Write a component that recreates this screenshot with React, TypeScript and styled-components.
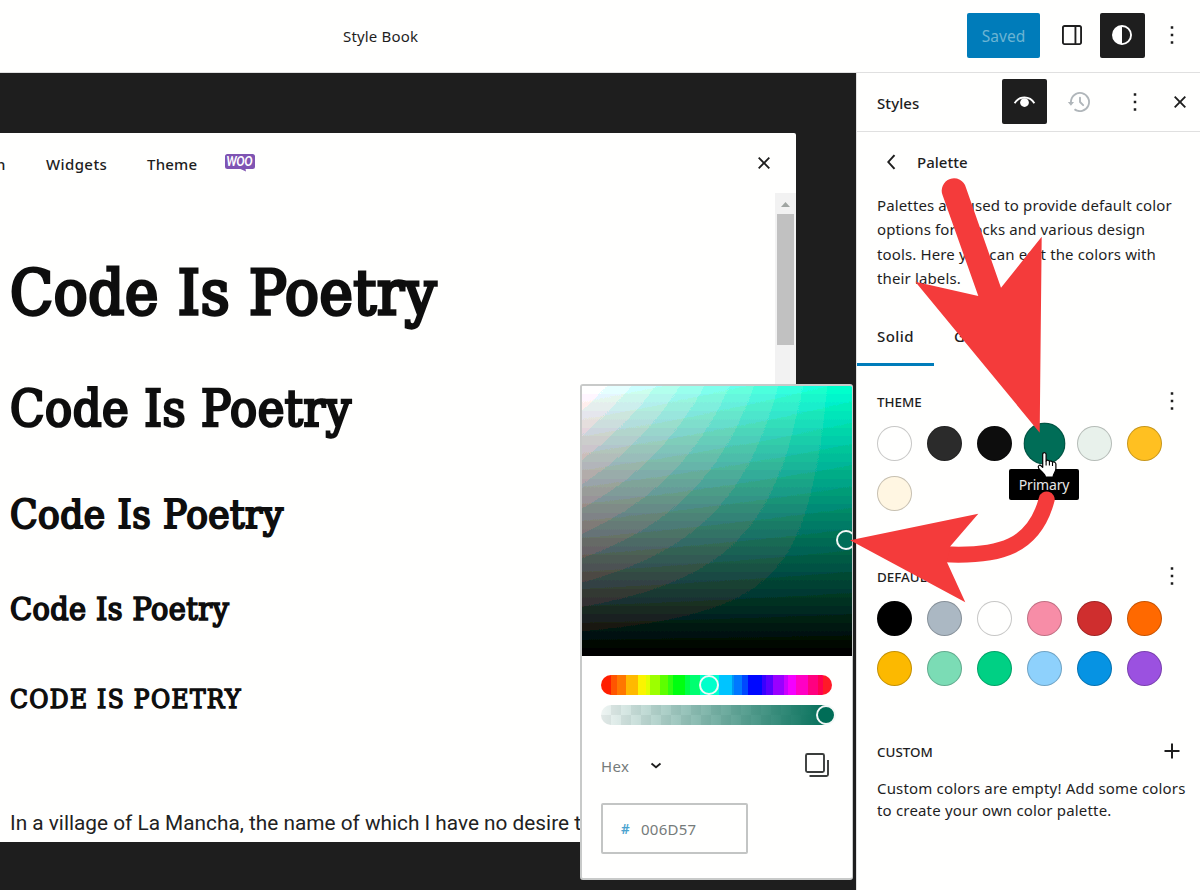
import React from 'react';
import styled, { createGlobalStyle } from 'styled-components';

const Global = createGlobalStyle`
  *, *::before, *::after { box-sizing: border-box; }
  html, body { margin: 0; padding: 0; }
  body { overflow: hidden; background: #fffffe; }
  button { border: 0; background: none; padding: 0; margin: 0; font: inherit; color: inherit; }
  h1, h2, h3, h4, h5, h6, p { margin: 0; }
`;

const Screen = styled.div`
  position: relative;
  width: 1200px;
  height: 890px;
  overflow: hidden;
  display: flex;
  flex-direction: column;
  background: #fffffe;
  color: #1e1e1e;
  font-family: 'Noto Sans', 'Open Sans', sans-serif;
  font-size: 15px;
`;

const TopBar = styled.header`
  flex: none;
  height: 73px;
  border-bottom: 1px solid #e0e0e0;
  display: flex;
  align-items: flex-start;
  justify-content: flex-end;
  padding: 13px 5px 0 343px;
`;

const DocTitle = styled.div`
  margin-right: auto;
  line-height: 46px;
  letter-spacing: 0.17px;
`;

const SavedButton = styled.button`
  width: 73px;
  height: 45px;
  margin-right: 10px;
  border-radius: 2px;
  background: #007cba;
  color: #6cb4d3;
  font-size: 15.5px;
  line-height: 46px;
`;

const IconButton = styled.button<{ $active?: boolean; $muted?: boolean; $ml?: number; $top?: number }>`
  flex: none;
  width: 45px;
  height: 45px;
  margin-left: ${(p) => p.$ml ?? 0}px;
  padding: ${(p) => p.$top ?? 7}px 7px 7px;
  display: flex;
  align-items: flex-start;
  justify-content: flex-start;
  border-radius: 2px;
  background: ${(p) => (p.$active ? '#1e1e1e' : 'transparent')};
  color: ${(p) => (p.$active ? '#fff' : p.$muted ? '#b0b6ba' : '#1e1e1e')};
`;

const Body = styled.div`
  flex: 1;
  min-height: 0;
  display: flex;
`;

const Stage = styled.main`
  width: 856px;
  padding-top: 60px;
  background: #1e1e1e;
`;

const Canvas = styled.section`
  width: 796px;
  height: 709px;
  display: flex;
  flex-direction: column;
  background: #fffffe;
  border-top-right-radius: 2px;
  overflow: hidden;
`;

const TabStrip = styled.nav`
  flex: none;
  height: 60px;
  display: flex;
  align-items: flex-start;
  padding: 8px 9px 0 0;
`;

const StripTab = styled.span<{ $w: number; $shift?: number; $ls?: number }>`
  width: ${(p) => p.$w}px;
  margin-left: ${(p) => p.$shift ?? 0}px;
  font-weight: 500;
  line-height: 46px;
  letter-spacing: ${(p) => p.$ls ?? 0.2}px;
  white-space: nowrap;
`;

const WooBadge = styled.svg`
  display: block;
  margin: 12px auto 0 0;
`;

const Preview = styled.div`
  flex: 1;
  min-height: 0;
  display: flex;
`;

const Samples = styled.div`
  flex: 1;
  padding-left: 10px;
  overflow: hidden;
  display: flex;
  flex-direction: column;
  color: #0e0e0e;
`;

const Heading = styled.h2<{ $size: number; $h: number; $ls: number }>`
  flex: none;
  font-family: 'DejaVu Serif Condensed', 'DejaVu Serif', serif;
  font-stretch: condensed;
  font-weight: 400;
  -webkit-text-stroke: 0.052em #0e0e0e;
  font-size: ${(p) => p.$size}px;
  line-height: ${(p) => p.$h}px;
  letter-spacing: ${(p) => p.$ls}px;
  white-space: nowrap;
`;

const Paragraph = styled.p`
  margin-top: 24px;
  font-family: Roboto, sans-serif;
  font-size: 20.8px;
  line-height: 32px;
  white-space: nowrap;
  color: #222;
`;

const Scrollbar = styled.div`
  flex: none;
  width: 21px;
  display: flex;
  flex-direction: column;
  align-items: center;
  background: #f2f2f2;
`;

const ScrollUp = styled.svg`
  display: block;
  width: 21px;
  height: 21px;
`;

const Thumb = styled.div`
  width: 17px;
  height: 131px;
  background: #c1c1c1;
`;

const Sidebar = styled.aside`
  width: 344px;
  border-left: 1px solid #e0e0e0;
  background: #fffffe;
  display: flex;
  flex-direction: column;
`;

const SideHeader = styled.div`
  flex: none;
  height: 59px;
  border-bottom: 1px solid #e0e0e0;
  display: flex;
  align-items: flex-start;
  padding: 6px 0 0 20px;
`;

const SideTitle = styled.h2`
  flex: none;
  width: 125px;
  font-size: 15px;
  font-weight: 500;
  line-height: 48px;
  letter-spacing: 0.1px;
`;

const BackRow = styled.div`
  flex: none;
  height: 60px;
  margin-bottom: 1px;
  padding-left: 20px;
  display: flex;
  align-items: center;
`;

const BackTitle = styled.h3`
  margin-left: 10px;
  font-size: 15px;
  font-weight: 500;
  line-height: 24px;
`;

const Description = styled.p`
  flex: none;
  padding-left: 20px;
  line-height: 24.4px;
  letter-spacing: 0.13px;
  white-space: nowrap;
`;

const Tabs = styled.div`
  flex: none;
  height: 59px;
  margin-top: 16px;
  display: flex;
`;

const Tab = styled.button<{ $active?: boolean }>`
  height: 59px;
  padding: 3px 20px 0;
  border-bottom: 3px solid ${(p) => (p.$active ? '#007cba' : 'transparent')};
  font-weight: 500;
  letter-spacing: 0.42px;
`;

const GroupHeader = styled.div<{ $h: number }>`
  flex: none;
  height: ${(p) => p.$h}px;
  padding: 0 5px 0 20px;
  display: flex;
  align-items: flex-end;
  justify-content: space-between;
`;

const GroupLabel = styled.h4`
  font-size: 13.4px;
  font-weight: 500;
  line-height: 43px;
  text-transform: uppercase;
`;

const Swatches = styled.div`
  flex: none;
  padding: 2px 0 0 20px;
  display: grid;
  grid-template-columns: repeat(6, 35px);
  grid-auto-rows: 35px;
  gap: 15px;
`;

const Swatch = styled.span<{ $color: string; $hover?: boolean }>`
  border-radius: 50%;
  background: ${(p) => p.$color};
  border: 1px solid rgba(0, 0, 0, 0.22);
  transform: ${(p) => (p.$hover ? 'scale(1.2)' : 'none')};
`;

const EmptyNote = styled.p`
  padding: 3px 0 0 20px;
  line-height: 22px;
  letter-spacing: 0.18px;
  white-space: nowrap;
`;

const Tooltip = styled.div`
  position: absolute;
  left: 1009px;
  top: 469px;
  width: 70px;
  height: 31px;
  border-radius: 2px;
  background: #000;
  color: #e6e6e6;
  font-size: 14px;
  line-height: 31px;
  letter-spacing: -0.2px;
  text-align: center;
`;

const Popover = styled.div`
  position: absolute;
  left: 580px;
  top: 384px;
  width: 273px;
  height: 496px;
  border: 2px solid #c8cac9;
  border-right-width: 1px;
  border-radius: 3px;
  background: #fffffe;
  overflow: hidden;
  display: flex;
  flex-direction: column;
`;

const Saturation = styled.div`
  flex: none;
  position: relative;
  height: 270px;
`;

const ColorField = styled.div`
  height: 270px;
  filter: url(#color-steps);
  background:
    linear-gradient(to top, #000, rgba(0, 0, 0, 0)),
    linear-gradient(to right, #fff, rgba(255, 255, 255, 0)),
    #00ffcb;
`;

const FilterDefs = styled.svg`
  position: absolute;
  width: 0;
  height: 0;
`;

const Knob = styled.span<{ $x: number; $y: number; $color: string }>`
  position: absolute;
  left: ${(p) => p.$x}px;
  top: ${(p) => p.$y}px;
  width: 20px;
  height: 20px;
  border-radius: 50%;
  border: 2px solid #f4f8f7;
  background: ${(p) => p.$color};
`;

const Sliders = styled.div`
  flex: none;
  padding: 19px 0 0 19px;
  display: flex;
  flex-direction: column;
  gap: 10px;
`;

const hueSteps: [string, number][] = [
  ['#ff1e00', 4.2], ['#ff5500', 7], ['#ff7700', 11], ['#ffb900', 16], ['#fbf400', 19.5],
  ['#e0ff00', 21], ['#9dff00', 25.5], ['#5dff00', 29], ['#30ff10', 31], ['#00ff10', 36.5],
  ['#00ff48', 38.5], ['#00ff70', 43], ['#00ffcb', 51], ['#00c4ff', 56.5], ['#0095f5', 57.5],
  ['#0078ff', 61], ['#0048ff', 63.6], ['#0008ff', 69.5], ['#3800ff', 71.5], ['#5a00ff', 74.5],
  ['#9a00ff', 79.3], ['#cc00ff', 80.8], ['#f400ff', 84.5], ['#ff00c4', 89.5], ['#ff0080', 94],
  ['#ff0050', 96], ['#ff1a28', 100],
];

const hueGradient = hueSteps
  .map(([color, end], i) => `${color} ${i ? hueSteps[i - 1][1] : 0}% ${end}%`)
  .join(', ');

const HueTrack = styled.div`
  position: relative;
  width: 231px;
  height: 20px;
  border-radius: 10px;
  background: linear-gradient(to right, ${hueGradient});
`;

const AlphaTrack = styled.div`
  position: relative;
  width: 231px;
  height: 20px;
  border-radius: 10px;
  background:
    linear-gradient(to right, rgba(0, 109, 87, 0.04), #006d57),
    repeating-conic-gradient(#eaedec 0 25%, #f8faf9 0 50%) 0 0 / 20px 20px;
`;

const FormatRow = styled.div`
  flex: none;
  height: 46px;
  margin-top: 17px;
  padding: 0 22px 0 19px;
  display: flex;
  align-items: center;
  color: #757b7a;
`;

const FormatLabel = styled.span`
  width: 49px;
  padding-top: 1px;
  letter-spacing: 0.4px;
`;

const Chevron = styled.svg`
  margin-top: 2px;
`;

const CopyIcon = styled.svg`
  margin-left: auto;
`;

const HexField = styled.div`
  flex: none;
  width: 147px;
  height: 51px;
  margin: 15px 0 0 19px;
  padding-left: 18px;
  display: flex;
  align-items: center;
  gap: 10px;
  border: 2px solid #c3c5c4;
  border-radius: 2px;
  color: #757b7a;
  font-size: 15px;
  letter-spacing: 0.25px;
`;

const Hash = styled.span`
  width: 10px;
  color: #4ba3cf;
  font-size: 13.5px;
  font-weight: 600;
`;

const Annotations = styled.svg`
  position: absolute;
  inset: 0;
  pointer-events: none;
`;

const icons = {
  more: 'M13 19h-2v-2h2v2zm0-6h-2v-2h2v2zm0-6h-2V5h2v2z',
  close:
    'M12 13.06l3.712 3.713 1.061-1.06L13.061 12l3.712-3.712-1.06-1.06L12 10.938 8.288 7.227l-1.061 1.06L10.939 12l-3.712 3.712 1.06 1.061L12 13.061z',
  drawer:
    'M18 4H6c-1.1 0-2 .9-2 2v12c0 1.1.9 2 2 2h12c1.1 0 2-.9 2-2V6c0-1.1-.9-2-2-2zm-4 14.5H6c-.3 0-.5-.2-.5-.5V6c0-.3.2-.5.5-.5h8v13zm4.5-.5c0 .3-.2.5-.5.5h-2.5v-13H18c.3 0 .5.2.5.5v12z',
  styles: 'M20 12a8 8 0 1 1-16 0 8 8 0 0 1 16 0Zm-1.5 0a6.5 6.5 0 0 1-6.5 6.5v-13a6.5 6.5 0 0 1 6.5 6.5Z',
  history:
    'M5.5 12h1.75l-2.5 3-2.5-3H4a8 8 0 113.134 6.35l.907-1.194A6.5 6.5 0 105.5 12zm9.53 1.97l-2.28-2.28V8.5a.75.75 0 00-1.5 0V12a.747.747 0 00.218.529l1.282-.84-1.28.842 2.5 2.5a.75.75 0 101.06-1.061z',
  back: 'M14.6 7l-1.2-1L8 12l5.4 6 1.2-1-4.6-5z',
  plus: 'M18 11.2h-5.2V6h-1.6v5.2H6v1.6h5.2V18h1.6v-5.2H18z',
};

const Icon = ({ name }: { name: keyof typeof icons }) => (
  <svg width="30" height="30" viewBox="0 0 24 24" fill="currentColor" fillRule="evenodd">
    <path d={icons[name]} />
  </svg>
);

const EyeIcon = () => (
  <svg width="30" height="30" viewBox="0 0 24 24" fill="none">
    <path d="M4.500 13C6.300 10 8.800 8.400 12.400 8.400s6.100 1.600 7.900 4.600" stroke="currentColor" strokeWidth="1.500" />
    <circle cx="12.400" cy="12.400" r="3.500" fill="currentColor" />
  </svg>
);

const steps = (n: number) => Array.from({ length: n }, (_, i) => (i / (n - 1)).toFixed(3)).join(' ');

const themeColors = ['#fffffe', '#2b2b2b', '#0d0d0d', '#006d57', '#e8f1eb', '#ffc021', '#fff6e2'];
const defaultColors = [
  '#000000', '#abb8c3', '#fffffe', '#f78da7', '#cf2e2e', '#ff6900',
  '#fcb900', '#7bdcb5', '#00d084', '#8ed1fc', '#0693e3', '#9b51e0',
];

export default function App() {
  return (
    <Screen>
      <Global />
      <TopBar>
        <DocTitle>Style Book</DocTitle>
        <SavedButton>Saved</SavedButton>
        <IconButton><Icon name="drawer" /></IconButton>
        <IconButton $active $ml={5}><Icon name="styles" /></IconButton>
        <IconButton $ml={5}><Icon name="more" /></IconButton>
      </TopBar>

      <Body>
        <Stage>
          <Canvas>
            <TabStrip>
              <StripTab $w={50} $shift={-4}>n</StripTab>
              <StripTab $w={101} $ls={0.4}>Widgets</StripTab>
              <StripTab $w={78}>Theme</StripTab>
              <WooBadge width="30" height="19" viewBox="0 0 30 19">
                <path d="M2.500 1h25a2.500 2.500 0 0 1 2.500 2.500v10a2.500 2.500 0 0 1-2.500 2.500h-7l.5 2.400-5.500-2.400h-13A2.500 2.500 0 0 1 0 13.500v-10A2.500 2.500 0 0 1 2.500 1z" fill="#7f54b3" />
                <text x="14.500" y="13" textAnchor="middle" textLength="26" lengthAdjust="spacingAndGlyphs" fontFamily="Lato, sans-serif" fontWeight="900" fontStyle="italic" fontSize="12.500" fill="#fff">WOO</text>
              </WooBadge>
              <IconButton><Icon name="close" /></IconButton>
            </TabStrip>
            <Preview>
              <Samples>
                <Heading $size={62.5} $h={200} $ls={0.75}>Code Is Poetry</Heading>
                <Heading $size={50} $h={32} $ls={0.6}>Code Is Poetry</Heading>
                <Heading $size={40} $h={179} $ls={0.5}>Code Is Poetry</Heading>
                <Heading $size={32} $h={11} $ls={0.42}>Code Is Poetry</Heading>
                <Heading $size={26} $h={168} $ls={1.35}>CODE IS POETRY</Heading>
                <Paragraph>In a village of La Mancha, the name of which I have no desire to</Paragraph>
              </Samples>
              <Scrollbar>
                <ScrollUp viewBox="0 0 21 21"><path d="M10.500 9l4.500 5h-9z" fill="#a0a5a2" /></ScrollUp>
                <Thumb />
              </Scrollbar>
            </Preview>
          </Canvas>
        </Stage>

        <Sidebar>
          <SideHeader>
            <SideTitle>Styles</SideTitle>
            <IconButton $active $top={8}><EyeIcon /></IconButton>
            <IconButton $muted $ml={11} $top={8}><Icon name="history" /></IconButton>
            <IconButton $ml={10} $top={8}><Icon name="more" /></IconButton>
            <IconButton $top={8}><Icon name="close" /></IconButton>
          </SideHeader>
          <BackRow>
            <Icon name="back" />
            <BackTitle>Palette</BackTitle>
          </BackRow>
          <Description>
            Palettes are used to provide default color<br />
            options for blocks and various design<br />
            tools. Here you can edit the colors with<br />
            their labels.
          </Description>
          <Tabs>
            <Tab $active>Solid</Tab>
            <Tab>Gradient</Tab>
          </Tabs>
          <GroupHeader $h={58}>
            <GroupLabel>Theme</GroupLabel>
            <IconButton><Icon name="more" /></IconButton>
          </GroupHeader>
          <Swatches>
            {themeColors.map((c, i) => <Swatch key={c} $color={c} $hover={i === 3} />)}
          </Swatches>
          <GroupHeader $h={88}>
            <GroupLabel>Default</GroupLabel>
            <IconButton><Icon name="more" /></IconButton>
          </GroupHeader>
          <Swatches>
            {defaultColors.map((c) => <Swatch key={c} $color={c} />)}
          </Swatches>
          <GroupHeader $h={88}>
            <GroupLabel>Custom</GroupLabel>
            <IconButton><Icon name="plus" /></IconButton>
          </GroupHeader>
          <EmptyNote>
            Custom colors are empty! Add some colors<br />
            to create your own color palette.
          </EmptyNote>
        </Sidebar>
      </Body>

      <Popover>
        <Saturation>
          <FilterDefs>
            <filter id="color-steps" x="0" y="0" width="1" height="1" colorInterpolationFilters="sRGB">
              <feComponentTransfer>
                <feFuncR type="discrete" tableValues={steps(11)} />
                <feFuncG type="discrete" tableValues={steps(32)} />
                <feFuncB type="discrete" tableValues={steps(16)} />
              </feComponentTransfer>
            </filter>
          </FilterDefs>
          <ColorField />
          <Knob $x={254} $y={144} $color="#006d57" />
        </Saturation>
        <Sliders>
          <HueTrack><Knob $x={98} $y={0} $color="#00ffcb" /></HueTrack>
          <AlphaTrack><Knob $x={215} $y={0} $color="#006d57" /></AlphaTrack>
        </Sliders>
        <FormatRow>
          <FormatLabel>Hex</FormatLabel>
          <Chevron width="12" height="8" viewBox="0 0 12 8" fill="none">
            <path d="M1.500 1.500L6 5.300l4.500-3.800" stroke="#1e1e1e" strokeWidth="1.800" />
          </Chevron>
          <CopyIcon width="26" height="26" viewBox="0 0 26 26" fill="none" stroke="#3a3d3c" strokeWidth="1.900">
            <rect x="2" y="2" width="18" height="18" rx="1.500" />
            <path d="M24 8v14.500a1.500 1.500 0 0 1-1.500 1.500H5.500" />
          </CopyIcon>
        </FormatRow>
        <HexField><Hash>#</Hash>006D57</HexField>
      </Popover>

      <Tooltip>Primary</Tooltip>

      <Annotations width="1200" height="890" viewBox="0 0 1200 890">
        <g transform="translate(1037 451.500)">
          <path
            d="M5.700 3c0-2.600 3.400-2.600 3.400 0v6.500c.6-1.200 3.100-1 3.300.6.800-1 2.900-.7 3.100.8 1-.8 3.400-.3 3.400 1.700v4.500c0 3.100-2.300 4.400-2.900 8.400H8.500c-.4-3.200-4.200-5.200-6.800-8.700-1.500-2.400.9-4 2.600-2.300l1.400 1.400z"
            fill="#fff" stroke="#000" strokeWidth="1.200" strokeLinejoin="round"
          />
          <path d="M9.100 9.500v4.500M12.400 10.500v3.500M15.500 11.500v3" stroke="#000" strokeWidth="1.100" />
        </g>
        <path
          d="M942.700 195.500A12.300 12.300 0 1 1 965.900 187.500L1001 287.700L1041.700 236.700L1039.700 432.700L915.300 281.700L978.300 296z"
          fill="#f43b3b"
        />
        <path d="M944 554.300C1000 557 1034 547 1046.700 499.500" fill="none" stroke="#f43b3b" strokeWidth="16" strokeLinecap="round" />
        <path d="M850 540.300L978.300 513.700L950.300 546.300L947 562.300L965.300 602.300z" fill="#f43b3b" />
      </Annotations>
    </Screen>
  );
}
